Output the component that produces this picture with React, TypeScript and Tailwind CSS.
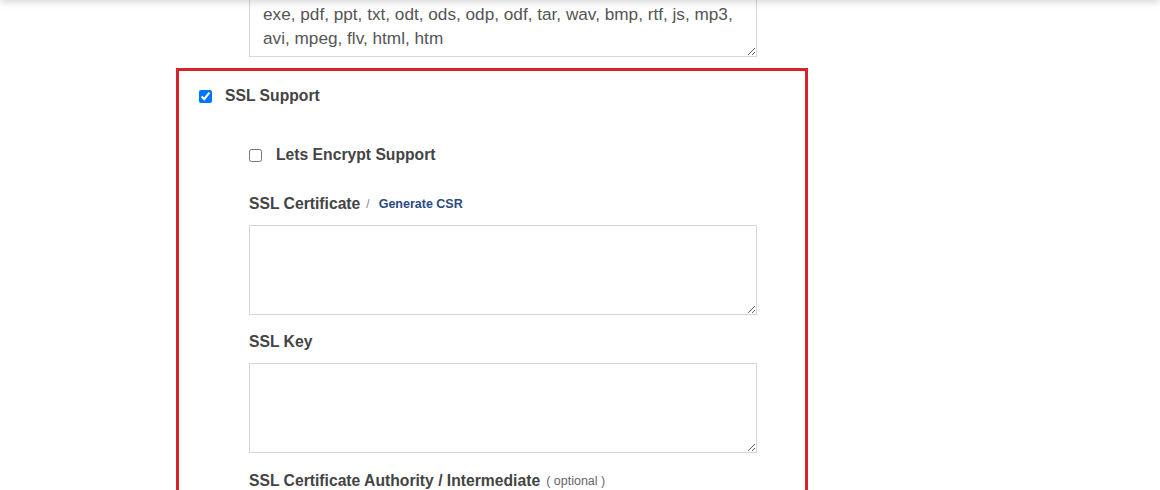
export default function App() {
  return (
    <div className="relative w-[1160px] h-[490px] overflow-hidden bg-white font-['Liberation_Sans',Arial,sans-serif]">
      <div className="absolute -top-[20px] left-0 right-0 h-[20px] bg-white shadow-[0_3px_7px_rgba(0,0,0,0.14)]" />
      <div className="pl-[176px]">
        <textarea
          readOnly
          className="block -mt-[5px] ml-[73px] w-[508px] h-[62px] border border-[#d6d6d6] px-[13px] py-[6px] text-[17.2px] leading-[24px] text-[#555] whitespace-pre overflow-hidden outline-none"
          defaultValue={"exe, pdf, ppt, txt, odt, ods, odp, odf, tar, wav, bmp, rtf, js, mp3,\navi, mpeg, flv, html, htm"}
        />
        <div className="mt-[11px] w-[632px] h-[440px] border-[3px] border-[#d8222c] pl-[20px] pt-[15px]">
          <label className="flex items-center h-[20px] gap-[13px] text-[15.7px] font-bold text-[#444]">
            <input type="checkbox" defaultChecked className="w-[13px] h-[13px] m-0" />
            SSL Support
          </label>
          <div className="ml-[50px]">
            <label className="mt-[39px] flex items-center h-[20px] gap-[14px] text-[15.7px] font-bold text-[#444]">
              <input type="checkbox" className="w-[13px] h-[13px] m-0" />
              Lets Encrypt Support
            </label>
            <div className="mt-[29px] flex items-center h-[20px] text-[#444]">
              <span className="text-[15.7px] font-bold">SSL Certificate</span>
              <span className="ml-[6px] text-[12px] text-[#888]">/</span>
              <a className="ml-[9px] text-[12.5px] font-bold text-[#2b4a80]">Generate CSR</a>
            </div>
            <textarea className="block mt-[11px] w-[508px] h-[90px] border border-[#d6d6d6] outline-none" />
            <div className="mt-[17px] h-[20px] flex items-center text-[15.7px] font-bold text-[#444]">SSL Key</div>
            <textarea className="block mt-[11px] w-[508px] h-[90px] border border-[#d6d6d6] outline-none" />
            <div className="mt-[18px] h-[20px] flex items-center text-[#444]">
              <span className="text-[15.7px] font-bold">SSL Certificate Authority / Intermediate</span>
              <span className="ml-[6px] text-[12.5px] text-[#666]">( optional )</span>
            </div>
          </div>
        </div>
      </div>
    </div>
  );
}
